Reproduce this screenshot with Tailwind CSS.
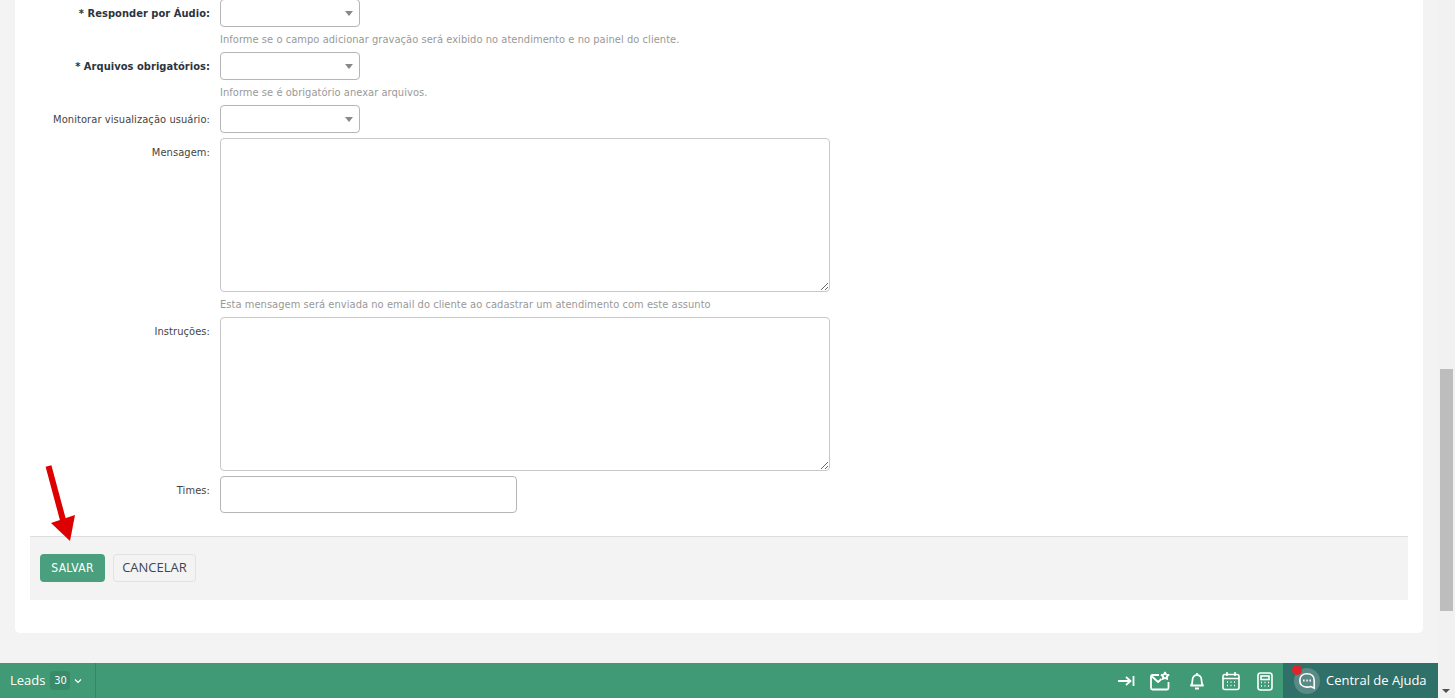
<!DOCTYPE html>
<html lang="pt-BR">
<head>
  <meta charset="UTF-8">
  <meta name="viewport" content="width=device-width, initial-scale=1.0">
  <title>Assunto</title>
  <script src="https://cdn.jsdelivr.net/npm/@tailwindcss/browser@4"></script>
</head>
<body class="h-[698px] overflow-hidden bg-[#f3f3f3] font-['DejaVu_Sans',sans-serif] font-stretch-condensed text-[11px] text-[#444]">

  <!-- Form card -->
  <div class="relative ml-[15px] mr-[32px] -mt-px h-[634px] rounded-b-[5px] bg-white px-[15px]">
    <div class="flex h-7 items-center">
      <label class="w-[190px] pr-[10px] pt-[2px] text-right font-bold tracking-[0.05px] text-[#2c3440]">* Responder por Áudio:</label>
      <div class="relative h-7 w-[140px] rounded-[4px] border border-[#b5b5b5] bg-white"><span class="absolute right-[6px] top-[11px] border-x-[4px] border-t-[5px] border-x-transparent border-t-[#888]"></span></div>
    </div>
    <p class="ml-[190px] mt-[6px] h-[19px] leading-[14px] tracking-[0.05px] text-[#999]">Informe se o campo adicionar gravação será exibido no atendimento e no painel do cliente.</p>
    <div class="flex h-7 items-center">
      <label class="w-[190px] pr-[10px] pt-[2px] text-right font-bold tracking-[0.05px] text-[#2c3440]">* Arquivos obrigatórios:</label>
      <div class="relative h-7 w-[140px] rounded-[4px] border border-[#b5b5b5] bg-white"><span class="absolute right-[6px] top-[11px] border-x-[4px] border-t-[5px] border-x-transparent border-t-[#888]"></span></div>
    </div>
    <p class="ml-[190px] mt-[6px] h-[19px] leading-[14px] tracking-[0.05px] text-[#999]">Informe se é obrigatório anexar arquivos.</p>
    <div class="flex h-7 items-center">
      <label class="w-[190px] pr-[10px] pt-[2px] text-right tracking-[0.08px]">Monitorar visualização usuário:</label>
      <div class="relative h-7 w-[140px] rounded-[4px] border border-[#b5b5b5] bg-white"><span class="absolute right-[6px] top-[11px] border-x-[4px] border-t-[5px] border-x-transparent border-t-[#888]"></span></div>
    </div>
    <div class="mt-[5px] flex">
      <label class="w-[190px] pr-[10px] pt-[7px] text-right tracking-[0.08px]">Mensagem:</label>
      <textarea class="block h-[154px] w-[610px] rounded-[4px] border border-[#c8c8c8] bg-white"></textarea>
    </div>
    <p class="ml-[190px] mt-[6px] h-[19px] leading-[14px] tracking-[0.05px] text-[#999]">Esta mensagem será enviada no email do cliente ao cadastrar um atendimento com este assunto</p>
    <div class="flex">
      <label class="w-[190px] pr-[10px] pt-[7px] text-right tracking-[0.08px]">Instruções:</label>
      <textarea class="block h-[154px] w-[610px] rounded-[4px] border border-[#c8c8c8] bg-white"></textarea>
    </div>
    <div class="mt-[5px] flex">
      <label class="w-[190px] pr-[10px] pt-[7px] text-right tracking-[0.08px]">Times:</label>
      <div class="h-[37px] w-[297px] rounded-[4px] border border-[#b5b5b5] bg-white"></div>
    </div>

    <!-- Form actions -->
    <div class="mt-[23px] flex h-[64px] items-start gap-2 border-t border-[#ddd] bg-[#f3f3f3] pl-[10px] pt-[17px]">
      <button class="h-7 w-[65px] rounded-[4px] bg-[#4a9f7e] text-[12px] tracking-[0.3px] text-white">SALVAR</button>
      <button class="h-7 w-[83px] rounded-[4px] border border-[#e2e2e2] bg-[#f3f3f3] font-['Open_Sans',sans-serif] font-stretch-normal text-[13px] text-[#3c4655]">CANCELAR</button>
    </div>
  </div>

  <!-- Red arrow annotation -->
  <svg class="absolute left-[40px] top-[460px]" width="45" height="85" viewBox="0 0 45 85" fill="none">
    <path d="M8.5 6 L23 60" stroke="#dd0000" stroke-width="6"/>
    <path d="M11 63 L35 55 L30 81 Z" fill="#dd0000"/>
  </svg>

  <!-- Scrollbar -->
  <div class="fixed bottom-0 right-0 top-0 w-[17px] bg-[#f1f1f1]">
    <div class="absolute left-[2px] top-[369px] h-[242px] w-[13px] bg-[#bdbdbd]"></div>
    <span class="absolute bottom-[5px] left-[4px] border-x-[4px] border-t-[4px] border-x-transparent border-t-[#505050]"></span>
  </div>

  <!-- Bottom bar -->
  <div class="fixed bottom-0 left-0 flex h-[35px] w-[1438px] items-center bg-[#3f9a75] text-white">
    <div class="flex h-full w-[96px] items-center border-r border-[#37875f] pl-[10px]">
      <span class="font-['Open_Sans',sans-serif] font-stretch-normal text-[13px]">Leads</span>
      <span class="ml-[5px] flex h-[19px] w-[20px] items-center justify-center rounded-[4px] bg-[#388a69] pt-px text-[11px]">30</span>
      <svg class="ml-[4px]" width="8" height="6" viewBox="0 0 8 6" fill="none"><path d="M1 1.5 L4 4.5 L7 1.5" stroke="#fff" stroke-width="1.2"/></svg>
    </div>
    <div class="ml-auto flex h-full items-center">
      <div class="flex items-center gap-[14px] pr-[8px]">
        <svg width="20" height="20" viewBox="0 0 20 20" fill="none" stroke="#fff" stroke-width="1.8"><path d="M3 10 H15 M11 6 L15.5 10 L11 14 M18.5 5 V15"/></svg>
        <svg width="22" height="22" viewBox="0 0 22 22" fill="none" stroke="#fff" stroke-width="1.8" stroke-linejoin="round"><path d="M10 5 H3.5 Q2 5 2 6.5 V18 Q2 19.5 3.5 19.5 H18 Q19.5 19.5 19.5 18 V12 M2.5 6 L9 12 L12.5 9"/><path d="M16 2.5 L17.2 4.6 L19.5 5 L17.8 6.6 L18.2 9 L16 7.9 L13.8 9 L14.2 6.6 L12.5 5 L14.8 4.6 Z"/></svg>
        <svg class="ml-[2px]" width="20" height="20" viewBox="0 0 20 20" fill="none" stroke="#fff" stroke-width="1.8" stroke-linejoin="round"><path d="M4 14.5 Q5.5 13 5.5 9 C5.5 6 7.5 4 10 4 C12.5 4 14.5 6 14.5 9 Q14.5 13 16 14.5 Z M10 2 V4 M8 17.5 H12"/></svg>
        <svg width="20" height="20" viewBox="0 0 20 20" fill="none" stroke="#fff" stroke-width="1.6"><rect x="2" y="3.5" width="16" height="15" rx="2"/><path d="M2 7.5 H18 M6 1 V5 M14 1 V5 M6 11 H7 M9.5 11 H10.5 M13 11 H14 M6 14.5 H7 M9.5 14.5 H10.5 M13 14.5 H14"/></svg>
        <svg width="20" height="20" viewBox="0 0 20 20" fill="none" stroke="#fff" stroke-width="1.6"><rect x="3" y="2" width="14" height="17" rx="2.5"/><rect x="6" y="5" width="8" height="3.5"/><path d="M6 11.5 H7 M9.5 11.5 H10.5 M13 11.5 H14 M6 15 H7 M9.5 15 H10.5 M13 15 H14"/></svg>
      </div>
      <div class="relative flex h-full w-[155px] items-center bg-[#2f7068] pl-[11px]">
        <span class="flex h-[26px] w-[26px] items-center justify-center rounded-full bg-[#5a8a85]">
          <svg width="20" height="20" viewBox="0 0 18 18" fill="none" stroke="#fff" stroke-width="1.5"><path d="M9 2.5 C13 2.5 15.5 5 15.5 8.5 V15.5 L12.5 14 Q11 14.5 9 14.5 C5 14.5 2.5 12 2.5 8.5 C2.5 5 5 2.5 9 2.5 Z"/><path stroke-width="1.8" d="M5.5 8.5 H6.8 M8.4 8.5 H9.7 M11.2 8.5 H12.5"/></svg>
        </span>
        <span class="absolute left-[9px] top-[2px] h-[10px] w-[10px] rounded-full bg-[#e0242b]"></span>
        <span class="ml-[6px] font-['Open_Sans',sans-serif] font-stretch-normal text-[13px]">Central de Ajuda</span>
      </div>
    </div>
  </div>

</body>
</html>
